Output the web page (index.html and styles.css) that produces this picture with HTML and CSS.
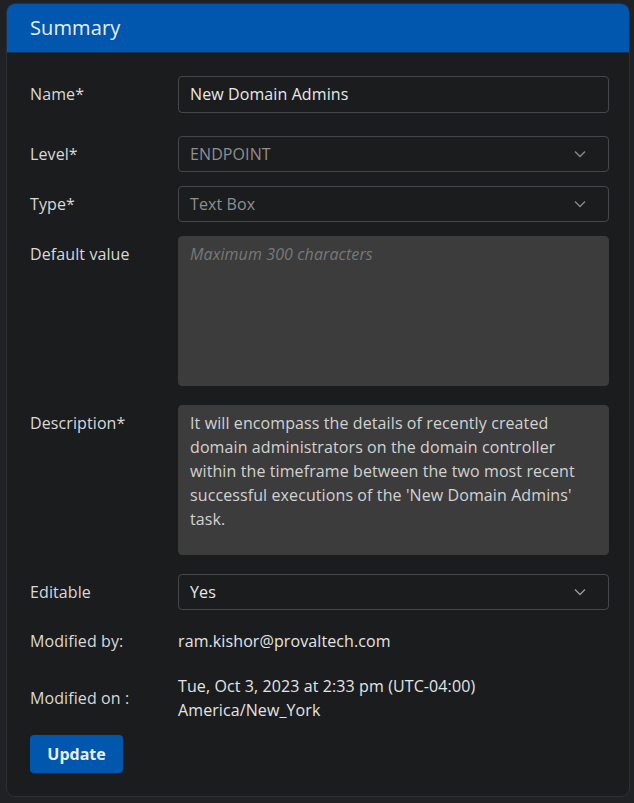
FILE: index.html
```html
<!DOCTYPE html>
<html>
<head>
<meta charset="utf-8">
<link rel="stylesheet" href="styles.css">
</head>
<body>
<div class="card">
  <div class="card-header">Summary</div>
  <div class="card-body">
    <div class="row row-name">
      <div class="label">Name*</div>
      <div class="field input">New Domain Admins</div>
    </div>
    <div class="row row-level">
      <div class="label">Level*</div>
      <div class="field select disabled"><span>ENDPOINT</span><svg class="chev" width="12" height="8" viewBox="0 0 12 8"><path d="M1 1.5 L6 6.5 L11 1.5" fill="none" stroke="#8a8b8e" stroke-width="1.3"/></svg></div>
    </div>
    <div class="row row-type">
      <div class="label">Type*</div>
      <div class="field select disabled"><span>Text Box</span><svg class="chev" width="12" height="8" viewBox="0 0 12 8"><path d="M1 1.5 L6 6.5 L11 1.5" fill="none" stroke="#8a8b8e" stroke-width="1.3"/></svg></div>
    </div>
    <div class="row row-default">
      <div class="label label-top">Default value</div>
      <div class="field area"><span class="placeholder">Maximum 300 characters</span></div>
    </div>
    <div class="row row-desc">
      <div class="label label-top">Description*</div>
      <div class="field area">It will encompass the details of recently created domain administrators on the domain controller within the timeframe between the two most recent successful executions of the 'New Domain Admins' task.</div>
    </div>
    <div class="row row-editable">
      <div class="label">Editable</div>
      <div class="field select"><span>Yes</span><svg class="chev" width="12" height="8" viewBox="0 0 12 8"><path d="M1 1.5 L6 6.5 L11 1.5" fill="none" stroke="#9a9b9e" stroke-width="1.3"/></svg></div>
    </div>
    <div class="row row-by">
      <div class="label">Modified by:</div>
      <div class="value">ram.kishor@provaltech.com</div>
    </div>
    <div class="row row-on">
      <div class="label">Modified on :</div>
      <div class="value">Tue, Oct 3, 2023 at 2:33 pm (UTC-04:00)<br>America/New_York</div>
    </div>
    <button class="btn">Update</button>
  </div>
</div>
</body>
</html>
```
FILE: styles.css
```css
html, body {
  margin: 0;
  padding: 0;
  background: #202124;
  font-family: "Open Sans", "Noto Sans", sans-serif;
  font-size: 16px;
  letter-spacing: 0.1px;
}
body {
  padding: 3px 4px 6px 6px;
  height: 803px;
  box-sizing: border-box;
}
.card {
  background: #1b1c1e;
  border: 1px solid #2e2f33;
  border-radius: 9px;
  overflow: hidden;
  height: 794px;
  box-sizing: border-box;
}
.card-header {
  background: #0157ae;
  color: #e9eef6;
  font-size: 20px;
  height: 48px;
  line-height: 48px;
  padding-left: 23px;
  border-bottom: 1px solid #16314f;
}
.card-body {
  padding: 23px 20px 24px 23px;
}
.row {
  display: grid;
  grid-template-columns: 148px 1fr;
  align-items: center;
}
.label {
  color: #d9d9d9;
  line-height: 24px;
}
.row-name .label {
  margin-top: -1px;
}
.label-top {
  align-self: start;
  padding-top: 6px;
}
.field {
  box-sizing: border-box;
  border: 1px solid #46474b;
  border-radius: 4px;
  padding: 0 11px;
  color: #e8e8e8;
  line-height: 24px;
}
.input {
  height: 37px;
  padding-top: 5px;
}
.select {
  height: 36px;
  display: flex;
  align-items: center;
  justify-content: space-between;
  padding-right: 22px;
}
.select.disabled span {
  color: #8e8f91;
}
.chev {
  display: block;
}
.area {
  height: 150px;
  background: #3c3c3c;
  border-color: #3c3c3c;
  padding-top: 5px;
  color: #d2d2d2;
}
.placeholder {
  color: #77787a;
  font-style: italic;
}
.value {
  color: #e4e4e4;
  line-height: 24px;
}
.row-level { margin-top: 23px; }
.row-type { margin-top: 14px; }
.row-default { margin-top: 14px; }
.row-desc { margin-top: 19px; }
.row-editable { margin-top: 19px; }
.row-by { margin-top: 19px; }
.row-on { margin-top: 21px; }
.btn {
  margin-top: 13px;
  background: #0157ae;
  color: #e9eef6;
  border: none;
  border-radius: 4px;
  font-family: "Open Sans", "Noto Sans", sans-serif;
  font-weight: 700;
  font-size: 16px;
  width: 93px;
  height: 38px;
  padding: 0;
}
```
